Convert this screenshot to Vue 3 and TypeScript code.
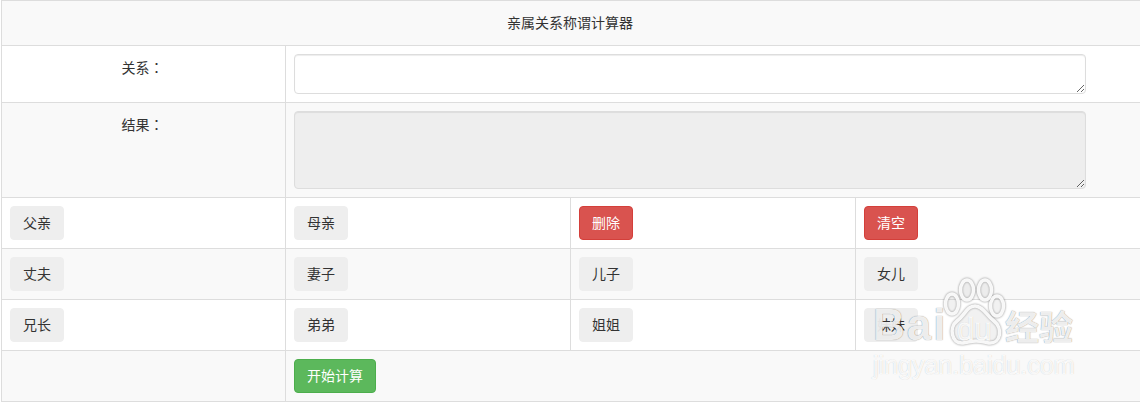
<script setup lang="ts">
const rows: { label: string; danger?: boolean }[][] = [
  [{ label: '父亲' }, { label: '母亲' }, { label: '删除', danger: true }, { label: '清空', danger: true }],
  [{ label: '丈夫' }, { label: '妻子' }, { label: '儿子' }, { label: '女儿' }],
  [{ label: '兄长' }, { label: '弟弟' }, { label: '姐姐' }, { label: '妹妹' }],
]
</script>

<template>
  <div class="page">
    <table class="calc">
      <colgroup>
        <col class="col-first" /><col class="col" /><col class="col" /><col class="col" />
      </colgroup>
      <tbody>
        <tr class="odd title-row">
          <td colspan="4" class="center">亲属关系称谓计算器</td>
        </tr>
        <tr>
          <td class="center label">关系<span class="colon">：</span></td>
          <td colspan="3"><textarea class="field rel"></textarea></td>
        </tr>
        <tr class="odd">
          <td class="center label">结果<span class="colon">：</span></td>
          <td colspan="3"><textarea class="field res" disabled></textarea></td>
        </tr>
        <tr v-for="(row, i) in rows" :key="i" :class="{ odd: i === 1 }">
          <td v-for="b in row" :key="b.label">
            <button class="btn" :class="{ danger: b.danger }">{{ b.label }}</button>
          </td>
        </tr>
        <tr class="odd">
          <td></td>
          <td colspan="3"><button class="btn success">开始计算</button></td>
        </tr>
      </tbody>
    </table>
    <div class="mark" aria-hidden="true">
      <span class="mark-text mark-b">Bai</span>
      <svg class="paw" viewBox="0 0 64 72" width="64" height="72">
        <g fill="rgba(255,255,255,0.12)" stroke="rgba(255,255,255,0.92)" stroke-width="3.5">
          <ellipse cx="9" cy="26" rx="6.5" ry="10" />
          <ellipse cx="24" cy="12" rx="6.5" ry="10" />
          <ellipse cx="42" cy="12" rx="6.5" ry="10" />
          <ellipse cx="54" cy="28" rx="6.5" ry="10" />
          <path d="M32 28 C24 28 22 37 14 43 C6 49 8 66 20 65 C26 64 28 63 33 63 C38 63 41 64 46 65 C58 66 60 50 51 43 C43 37 40 28 32 28 Z" />
        </g>
      </svg>
      <span class="mark-text mark-du">du</span>
      <span class="mark-text mark-cn">经验</span>
      <span class="mark-text mark-url">jingyan.baidu.com</span>
    </div>
  </div>
</template>

<style>
html, body { margin: 0; background: #fff; overflow: hidden; }
</style>

<style scoped>
.page {
  position: relative;
  width: 1140px;
  height: 402px;
  overflow: hidden;
  padding-left: 1px;
  box-sizing: border-box;
  font-family: "Open Sans", "Liberation Sans", "Noto Sans CJK SC", sans-serif;
  font-size: 14px;
  color: #333;
}
.calc {
  border-collapse: collapse;
  table-layout: fixed;
  width: 1139px;
}
.col-first { width: 284px; }
.col { width: 285px; }
.calc td {
  border: 1px solid #ddd;
  padding: 8px;
  line-height: 20px;
  vertical-align: top;
  box-sizing: border-box;
}
.odd td { background: #f9f9f9; }
.calc .title-row td { padding: 12px 10px 12px 8px; }
.center { text-align: center; }
.calc .label { padding: 11px 10px 8px 8px; }
.colon { font-family: "Noto Sans CJK TC", sans-serif; }
.field {
  display: block;
  width: 792px;
  box-sizing: border-box;
  border: 1px solid #ddd;
  border-radius: 4px;
  background: #fff;
  padding: 6px 12px;
  margin: 0;
  box-shadow: inset 0 1px 1px rgba(0, 0, 0, 0.075);
  font: inherit;
}
.rel { height: 40px; }
.res { height: 78px; background: #eee; }
.btn {
  display: inline-block;
  box-sizing: border-box;
  height: 34px;
  padding: 6px 12px;
  border: 1px solid #eee;
  border-radius: 4px;
  background: #eee;
  color: #333;
  font-family: inherit;
  font-size: 14px;
  line-height: 20px;
  vertical-align: top;
}
.danger { background: #d9534f; border-color: #d43f3a; color: #fff; }
.success { background: #5cb85c; border-color: #4cae4c; color: #fff; }
.mark {
  position: absolute;
  left: 872px;
  top: 278px;
  width: 210px;
  height: 104px;
  pointer-events: none;
}
.paw {
  position: absolute;
  left: 71px;
  top: 0;
  filter: drop-shadow(0 0 1px rgba(0, 0, 0, 0.5));
}
.mark-text {
  position: absolute;
  white-space: nowrap;
  font-family: "Liberation Sans", "Noto Sans CJK SC", sans-serif;
  color: rgba(255, 255, 255, 0.9);
  text-shadow: 0 0 1px rgba(0, 0, 0, 0.55);
}
.mark-b {
  left: 1px;
  top: 22px;
  font-size: 44px;
  line-height: 50px;
  font-weight: 700;
  letter-spacing: 2px;
}
.mark-du {
  left: 85px;
  top: 35px;
  font-size: 31px;
  line-height: 34px;
  font-weight: 400;
  -webkit-text-stroke: 1px rgba(255, 255, 255, 0.9);
}
.mark-cn {
  left: 133px;
  top: 28px;
  font-size: 34px;
  line-height: 44px;
  font-weight: 700;
}
.mark-url {
  left: 1px;
  top: 72px;
  font-size: 25px;
  line-height: 30px;
  font-weight: 400;
  -webkit-text-stroke: 1px rgba(255, 255, 255, 0.9);
}
</style>
